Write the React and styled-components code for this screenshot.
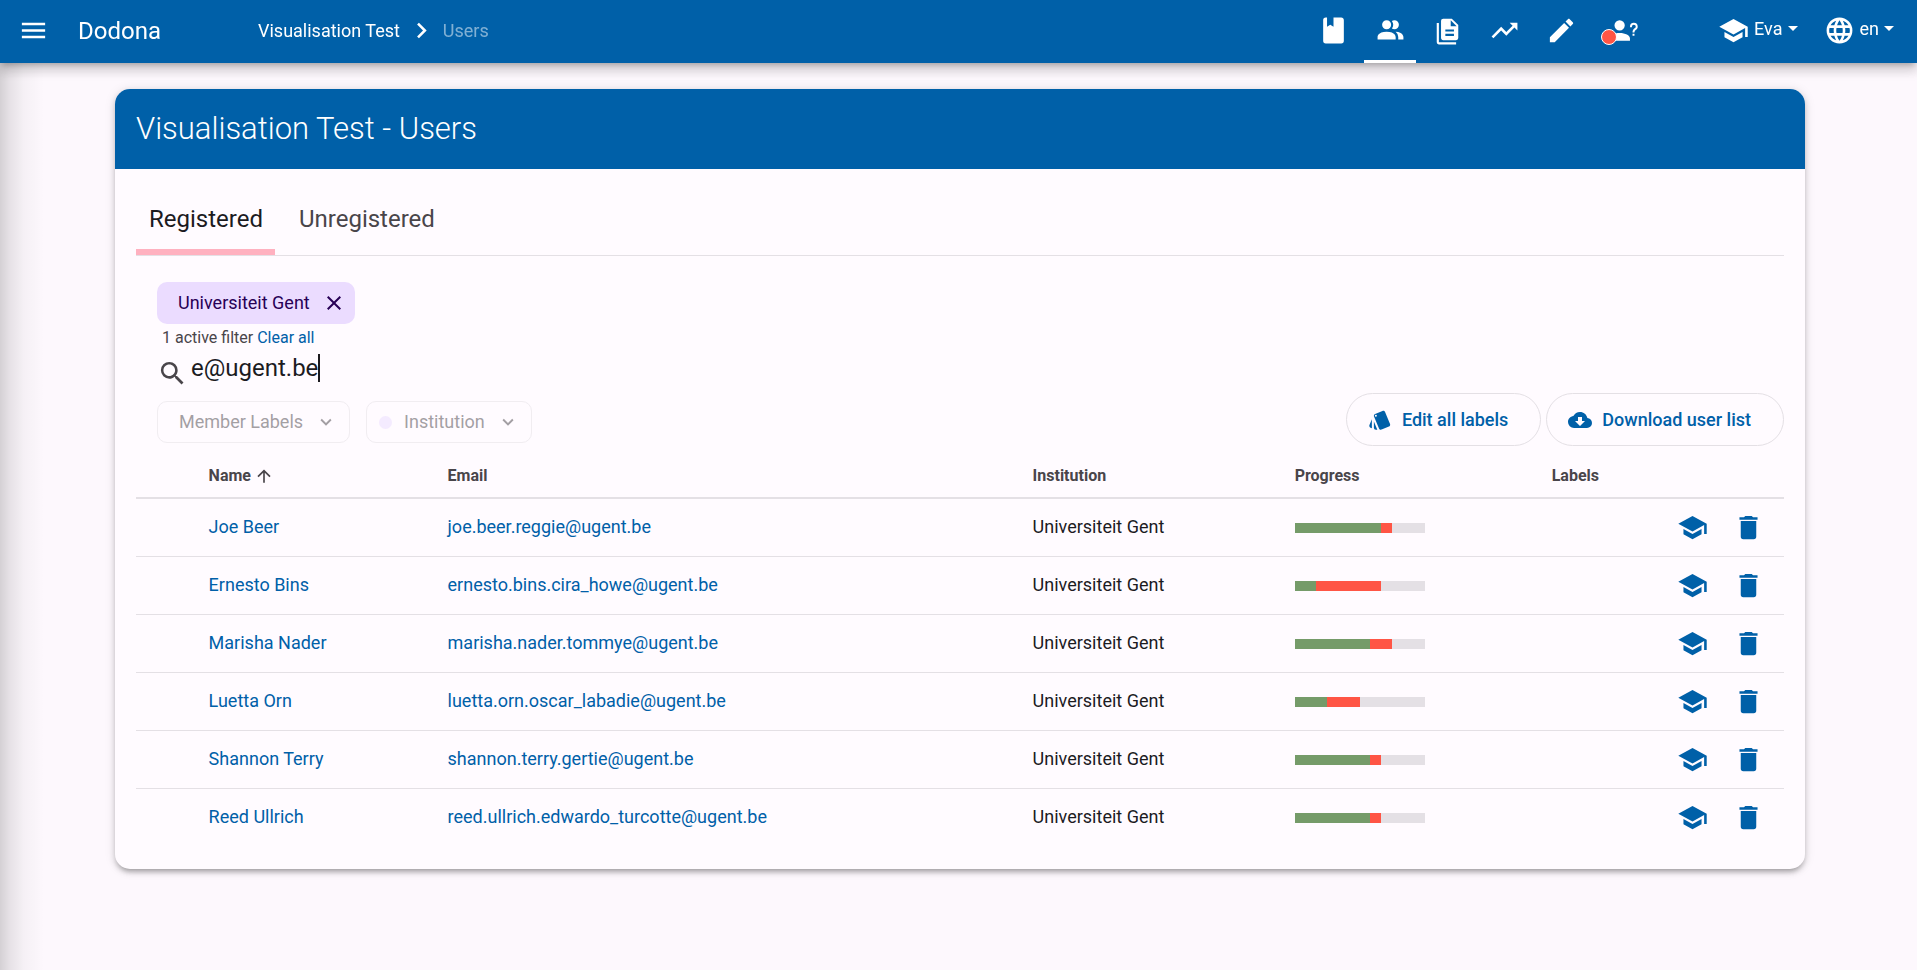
import React from "react";
import styled, { createGlobalStyle, css } from "styled-components";

const BLUE = "#0060a8";
const LINE = "#e4e0e5";
const MUTED = "#49454a";

const GlobalStyle = createGlobalStyle`
  *, *::before, *::after { box-sizing: border-box; }
  body {
    margin: 0;
    background: #fdf8fd;
    color: #1c1b1f;
    font-family: Roboto, "Liberation Sans", sans-serif;
    font-size: 18px;
    line-height: 26px;
  }
  a { color: ${BLUE}; text-decoration: none; }
  button, input { font: inherit; color: inherit; }
`;

const icons = {
  menu: "M3,6H21V8H3V6M3,11H21V13H3V11M3,16H21V18H3V16Z",
  chevronRight: "M8.59,16.58L13.17,12L8.59,7.41L10,6L16,12L10,18L8.59,16.58Z",
  chevronDown: "M7.41,8.58L12,13.17L16.59,8.58L18,10L12,16L6,10L7.41,8.58Z",
  book: "M18,22A2,2 0 0,0 20,20V4C20,2.89 19.1,2 18,2H12V9L9.5,7.5L7,9V2H6A2,2 0 0,0 4,4V20A2,2 0 0,0 6,22H18Z",
  users: "M16 17V19H2V17S2 13 9 13 16 17 16 17M12.5 7.5A3.5 3.5 0 1 0 9 11A3.5 3.5 0 0 0 12.5 7.5M15.94 13A5.32 5.32 0 0 1 18 17V19H22V17S22 13.37 15.94 13M15 4A3.39 3.39 0 0 0 13.07 4.59A5 5 0 0 1 13.07 10.41A3.39 3.39 0 0 0 15 11A3.5 3.5 0 0 0 15 4Z",
  files: "M15,7H20.5L15,1.5V7M8,0H16L22,6V18A2,2 0 0,1 20,20H8C6.89,20 6,19.1 6,18V2A2,2 0 0,1 8,0M4,4V22H20V24H4A2,2 0 0,1 2,22V4H4M10,10V12H18V10H10M10,14V16H18V14H10Z",
  trending: "M16,6L18.29,8.29L13.41,13.17L9.41,9.17L2,16.59L3.41,18L9.41,12L13.41,16L19.71,9.71L22,12V6H16Z",
  pencil: "M20.71,7.04C21.1,6.65 21.1,6 20.71,5.63L18.37,3.29C18,2.9 17.35,2.9 16.96,3.29L15.12,5.12L18.87,8.87M3,17.25V21H6.75L17.81,9.93L14.06,6.18L3,17.25Z",
  question: "M13,8A4,4 0 0,1 9,12A4,4 0 0,1 5,8A4,4 0 0,1 9,4A4,4 0 0,1 13,8M17,18V20H1V18C1,15.79 4.58,14 9,14C13.42,14 17,15.79 17,18M20.5,14.5V16H19V14.5H20.5M18.5,9.5H17V9A3,3 0 0,1 20,6A3,3 0 0,1 23,9C23,9.97 22.5,10.88 21.71,11.41L21.41,11.6C20.84,12 20.5,12.61 20.5,13.3V13.5H19V13.3C19,12.11 19.6,11 20.59,10.35L20.88,10.16C21.27,9.9 21.5,9.47 21.5,9A1.5,1.5 0 0,0 20,7.5A1.5,1.5 0 0,0 18.5,9V9.5Z",
  school: "M12,3L1,9L12,15L21,10.09V17H23V9M5,13.18V17.18L12,21L19,17.18V13.18L12,17L5,13.18Z",
  globe: "M16.36,14C16.44,13.34 16.5,12.68 16.5,12C16.5,11.32 16.44,10.66 16.36,10H19.74C19.9,10.64 20,11.31 20,12C20,12.69 19.9,13.36 19.74,14M14.59,19.56C15.19,18.45 15.65,17.25 15.97,16H18.92C17.96,17.65 16.43,18.93 14.59,19.56M14.34,14H9.66C9.56,13.34 9.5,12.68 9.5,12C9.5,11.32 9.56,10.65 9.66,10H14.34C14.43,10.65 14.5,11.32 14.5,12C14.5,12.68 14.43,13.34 14.34,14M12,19.96C11.17,18.76 10.5,17.43 10.09,16H13.91C13.5,17.43 12.83,18.76 12,19.96M8,8H5.08C6.03,6.34 7.57,5.06 9.4,4.44C8.8,5.55 8.35,6.75 8,8M5.08,16H8C8.35,17.25 8.8,18.45 9.4,19.56C7.57,18.93 6.03,17.65 5.08,16M4.26,14C4.1,13.36 4,12.69 4,12C4,11.31 4.1,10.64 4.26,10H7.64C7.56,10.66 7.5,11.32 7.5,12C7.5,12.68 7.56,13.34 7.64,14M12,4.03C12.83,5.23 13.5,6.57 13.91,8H10.09C10.5,6.57 11.17,5.23 12,4.03M18.92,8H15.97C15.65,6.75 15.19,5.55 14.59,4.44C16.43,5.07 17.96,6.34 18.92,8M12,2C6.47,2 2,6.5 2,12A10,10 0 0,0 12,22A10,10 0 0,0 22,12A10,10 0 0,0 12,2Z",
  close: "M19,6.41L17.59,5L12,10.59L6.41,5L5,6.41L10.59,12L5,17.59L6.41,19L12,13.41L17.59,19L19,17.59L13.41,12L19,6.41Z",
  search: "M9.5,3A6.5,6.5 0 0,1 16,9.5C16,11.11 15.41,12.59 14.44,13.73L14.71,14H15.5L20.5,19L19,20.5L14,15.5V14.71L13.73,14.44C12.59,15.41 11.11,16 9.5,16A6.5,6.5 0 0,1 3,9.5A6.5,6.5 0 0,1 9.5,3M9.5,5C7,5 5,7 5,9.5C5,12 7,14 9.5,14C12,14 14,12 14,9.5C14,7 12,5 9.5,5Z",
  arrowUp: "M13,20H11V8L5.5,13.5L4.08,12.08L12,4.16L19.92,12.08L18.5,13.5L13,8V20Z",
  cards: "M2.53,19.65L3.87,20.21V11.18L1.44,17.04C1.03,18.06 1.5,19.23 2.53,19.65M22.03,15.95L17.07,4C16.76,3.23 16.03,2.77 15.26,2.75C15,2.75 14.73,2.79 14.47,2.9L7.1,5.95C6.35,6.26 5.89,7 5.87,7.75C5.86,8 5.91,8.29 6,8.55L11,20.5C11.29,21.28 12.03,21.74 12.81,21.75C13.07,21.75 13.33,21.7 13.58,21.6L20.94,18.55C21.96,18.13 22.45,16.96 22.03,15.95M7.88,8.75A1,1 0 0,1 6.88,7.75A1,1 0 0,1 7.88,6.75A1,1 0 0,1 8.88,7.75A1,1 0 0,1 7.88,8.75M5.88,19.75A2,2 0 0,0 7.88,21.75H9.33L5.88,13.41V19.75Z",
  download: "M17,13L12,18L7,13H10V9H14V13M19.35,10.03C18.67,6.59 15.64,4 12,4C9.11,4 6.6,5.64 5.35,8.03C2.34,8.36 0,10.9 0,14A6,6 0 0,0 6,20H19A5,5 0 0,0 24,15C24,12.36 21.95,10.22 19.35,10.03Z",
  trash: "M19,4H15.5L14.5,3H9.5L8.5,4H5V6H19M6,19A2,2 0 0,0 8,21H16A2,2 0 0,0 18,19V7H6V19Z",
};
// The files drawing fills its whole grid, so it gets a wider view box.
const viewBoxes = { files: "-2.4 -3.4 28.8 28.8" };

const Svg = styled.svg`
  display: block;
  flex: none;
  fill: currentColor;
`;
const Icon = ({ name, size = 31 }) => (
  <Svg width={size} height={size} viewBox={viewBoxes[name] || "0 0 24 24"} aria-hidden="true">
    <path d={icons[name]} />
  </Svg>
);

const Page = styled.div`
  min-height: 100vh;
  padding: 89px 0 24px;
  background: linear-gradient(
    to right,
    rgba(0, 0, 0, 0.16),
    rgba(0, 0, 0, 0.09) 10px,
    rgba(0, 0, 0, 0.03) 24px,
    transparent 44px
  );
`;

const Navbar = styled.header`
  position: fixed;
  z-index: 2;
  inset: 0 0 auto 0;
  height: 63px;
  padding: 0 20px 2px 18px;
  display: flex;
  align-items: center;
  background: ${BLUE};
  color: #fff;
  box-shadow: 0 5px 5px -3px rgba(0, 0, 0, 0.2), 0 8px 10px 1px rgba(0, 0, 0, 0.1), 0 3px 14px 2px rgba(0, 0, 0, 0.1);
`;
const PlainButton = styled.button`
  display: flex;
  align-items: center;
  padding: 0;
  border: 0;
  background: none;
  cursor: pointer;
`;
const Brand = styled.a`
  margin-left: 29px;
  width: 180px;
  color: #fff;
  font-size: 24px;
`;
const Crumbs = styled.nav`
  flex: 1;
  display: flex;
  align-items: center;
  gap: 6px;
  a { color: #fff; }
`;
const CurrentCrumb = styled.span`
  color: rgba(255, 255, 255, 0.5);
`;
const CourseNav = styled.nav`
  display: flex;
  align-self: stretch;
  gap: 5px;
  margin: 0 63px -2px 0;
`;
const CourseLink = styled.a`
  position: relative;
  width: ${(p) => (p.$wide ? 63 : 52)}px;
  display: flex;
  align-items: center;
  justify-content: center;
  color: #fff;
  border-bottom: 3px solid ${(p) => (p.$active ? "#fff" : "transparent")};
`;
const Notification = styled.span`
  position: absolute;
  left: 9px;
  bottom: 15px;
  width: 16px;
  height: 16px;
  border: 1px solid #fff;
  border-radius: 50%;
  background: #ff5545;
`;
const UserMenus = styled.div`
  display: flex;
  gap: 26px;
  margin-right: 3px;
`;
const MenuButton = styled(PlainButton)`
  gap: 5px;
  line-height: 20px;
`;
const MenuLabel = styled.span`
  display: flex;
  align-items: center;
  gap: 5px;
  padding-bottom: 4px;
`;
const Caret = styled.span`
  border: 5px solid transparent;
  border-top-color: currentColor;
  border-bottom: 0;
`;

const Card = styled.main`
  margin: 0 112px 0 115px;
  border-radius: 15px;
  background: #fffbff;
  box-shadow: 0 5px 5px -3px rgba(0, 0, 0, 0.22), 0 3px 6px rgba(0, 0, 0, 0.16), 0 1px 12px rgba(0, 0, 0, 0.1);
`;
const CardTitle = styled.h1`
  margin: 0;
  padding: 20px 21px;
  border-radius: 15px 15px 0 0;
  background: ${BLUE};
  color: #fff;
  font-size: 31px;
  font-weight: 300;
  line-height: 40px;
`;
const CardBody = styled.div`
  padding: 20px 21px 23px;
`;
const Tabs = styled.nav`
  display: flex;
  gap: 11px;
  border-bottom: 1px solid ${LINE};
`;
const Tab = styled.a`
  padding: 15px 12px 14px 13px;
  color: ${(p) => (p.$active ? "#1c1b1f" : MUTED)};
  border-bottom: 6px solid ${(p) => (p.$active ? "#ffb1c0" : "transparent")};
  font-size: 24px;
  line-height: 31px;
`;
const Filters = styled.section`
  padding: 26px 0 0 21px;
`;
const Chip = styled.span`
  width: max-content;
  height: 42px;
  padding: 0 9px 0 21px;
  display: flex;
  align-items: center;
  gap: 12px;
  border-radius: 10px;
  background: #ebdcff;
  color: #280056;
`;
const FilterSummary = styled.p`
  margin: 4px 0 0 5px;
  color: ${MUTED};
  font-size: 16px;
  line-height: 20px;
`;
const SearchField = styled.label`
  height: 45px;
  display: flex;
  align-items: center;
  gap: 3px;
  color: ${MUTED};
`;
const SearchIcon = styled.span`
  padding-top: 6px;
`;
const SearchInput = styled.input`
  field-sizing: content;
  height: 34px;
  padding: 0 0 6px;
  border: 0;
  outline: 0;
  background: none;
  color: #1c1b1f;
  caret-color: transparent;
  font-size: 24px;
`;
const InputWrap = styled.span`
  display: flex;
  align-items: flex-start;
  height: 34px;
`;
const Cursor = styled.span`
  width: 2px;
  height: 28px;
  background: #1c1b1f;
`;
const Toolbar = styled.div`
  display: flex;
  justify-content: space-between;
  align-items: flex-start;
  padding-left: 21px;
`;
const ButtonGroup = styled.div`
  display: flex;
  gap: ${(p) => p.$gap}px;
  padding-top: ${(p) => p.$drop || 0}px;
`;
const Dropdown = styled(PlainButton)`
  height: 42px;
  padding: 0 12px 0 ${(p) => (p.$dot ? 12 : 21)}px;
  gap: 12px;
  border: 1px solid ${LINE};
  border-radius: 10px;
  color: ${MUTED};
  opacity: 0.5;
`;
const Dot = styled.span`
  width: 13px;
  height: 13px;
  border-radius: 50%;
  background: #ebdcff;
`;
const OutlineButton = styled(PlainButton)`
  height: 53px;
  padding: 0 32px 0 21px;
  gap: 10px;
  border: 1px solid ${LINE};
  border-radius: 27px;
  color: ${BLUE};
  font-weight: 500;
`;

const Table = styled.table`
  width: 100%;
  border-collapse: collapse;
  table-layout: fixed;
`;
const Col = styled.col`
  width: ${(p) => p.$width};
`;
const cell = css`
  padding: 0 10px;
  text-align: left;
`;
const Th = styled.th`
  ${cell}
  height: 52px;
  padding-top: 8px;
  border-bottom: 2px solid ${LINE};
  color: ${MUTED};
  font-size: 16px;
  font-weight: 700;
`;
const SortButton = styled(PlainButton)`
  gap: 3px;
`;
const Td = styled.td`
  ${cell}
  height: 58px;
`;
const Row = styled.tr`
  & + & { border-top: 1px solid ${LINE}; }
`;
const Bar = styled.div`
  width: 130px;
  height: 10px;
  margin-top: 2px;
  display: flex;
  background: ${LINE};
`;
const BarPart = styled.div`
  background: ${(p) => (p.$wrong ? "#ff5545" : "#759b69")};
`;
const Actions = styled.div`
  display: flex;
  gap: 25px;
  color: ${BLUE};
`;

const users = [
  ["Joe Beer", "joe.beer.reggie@ugent.be", 8, 1],
  ["Ernesto Bins", "ernesto.bins.cira_howe@ugent.be", 2, 6],
  ["Marisha Nader", "marisha.nader.tommye@ugent.be", 7, 2],
  ["Luetta Orn", "luetta.orn.oscar_labadie@ugent.be", 3, 3],
  ["Shannon Terry", "shannon.terry.gertie@ugent.be", 7, 1],
  ["Reed Ullrich", "reed.ullrich.edwardo_turcotte@ugent.be", 7, 1],
];
const EXERCISES = 12;
const share = (n) => ({ width: `${(n / EXERCISES) * 100}%` });

const courseLinks = [
  ["book", "Course"],
  ["users", "Users"],
  ["files", "Submissions"],
  ["trending", "Statistics"],
  ["pencil", "Edit"],
  ["question", "Questions"],
];

export default function App() {
  return (
    <>
      <GlobalStyle />
      <Navbar>
        <PlainButton aria-label="Menu"><Icon name="menu" /></PlainButton>
        <Brand href="#">Dodona</Brand>
        <Crumbs aria-label="Breadcrumb">
          <a href="#">Visualisation Test</a>
          <Icon name="chevronRight" />
          <CurrentCrumb>Users</CurrentCrumb>
        </Crumbs>
        <CourseNav aria-label="Course">
          {courseLinks.map(([icon, label]) => (
            <CourseLink
              key={icon}
              href="#"
              aria-label={label}
              $active={icon === "users"}
              $wide={icon === "question"}
            >
              <Icon name={icon} />
              {icon === "question" && <Notification />}
            </CourseLink>
          ))}
        </CourseNav>
        <UserMenus>
          <MenuButton><Icon name="school" /><MenuLabel>Eva <Caret /></MenuLabel></MenuButton>
          <MenuButton><Icon name="globe" /><MenuLabel>en <Caret /></MenuLabel></MenuButton>
        </UserMenus>
      </Navbar>
      <Page>
        <Card>
          <CardTitle>Visualisation Test - Users</CardTitle>
          <CardBody>
            <Tabs>
              <Tab href="#" $active>Registered</Tab>
              <Tab href="#">Unregistered</Tab>
            </Tabs>
            <Filters>
              <Chip>
                Universiteit Gent
                <PlainButton aria-label="Remove filter"><Icon name="close" size={24} /></PlainButton>
              </Chip>
              <FilterSummary>1 active filter <a href="#">Clear all</a></FilterSummary>
              <SearchField>
                <SearchIcon><Icon name="search" /></SearchIcon>
                <InputWrap>
                  <SearchInput aria-label="Search users" defaultValue="e@ugent.be" />
                  <Cursor />
                </InputWrap>
              </SearchField>
            </Filters>
            <Toolbar>
              <ButtonGroup $gap={16} $drop={8}>
                <Dropdown>Member Labels <Icon name="chevronDown" size={22} /></Dropdown>
                <Dropdown $dot><Dot />Institution <Icon name="chevronDown" size={22} /></Dropdown>
              </ButtonGroup>
              <ButtonGroup $gap={5}>
                <OutlineButton><Icon name="cards" size={24} />Edit all labels</OutlineButton>
                <OutlineButton><Icon name="download" size={24} />Download user list</OutlineButton>
              </ButtonGroup>
            </Toolbar>
            <Table>
              <colgroup>
                <Col $width="3.8%" />
                <Col $width="14.5%" />
                <Col $width="35.5%" />
                <Col $width="15.9%" />
                <Col $width="15.6%" />
                <Col $width="auto" />
                <Col $width="7.1%" />
              </colgroup>
              <thead>
                <tr>
                  <Th />
                  <Th scope="col"><SortButton>Name <Icon name="arrowUp" size={20} /></SortButton></Th>
                  <Th scope="col">Email</Th>
                  <Th scope="col">Institution</Th>
                  <Th scope="col">Progress</Th>
                  <Th scope="col">Labels</Th>
                  <Th />
                </tr>
              </thead>
              <tbody>
                {users.map(([name, email, correct, wrong]) => (
                  <Row key={email}>
                    <Td />
                    <Td><a href="#">{name}</a></Td>
                    <Td><a href="#">{email}</a></Td>
                    <Td>Universiteit Gent</Td>
                    <Td>
                      <Bar>
                        <BarPart style={share(correct)} />
                        <BarPart $wrong style={share(wrong)} />
                      </Bar>
                    </Td>
                    <Td />
                    <Td>
                      <Actions>
                        <PlainButton aria-label={`Make ${name} administrator`}><Icon name="school" /></PlainButton>
                        <PlainButton aria-label={`Remove ${name}`}><Icon name="trash" /></PlainButton>
                      </Actions>
                    </Td>
                  </Row>
                ))}
              </tbody>
            </Table>
          </CardBody>
        </Card>
      </Page>
    </>
  );
}
